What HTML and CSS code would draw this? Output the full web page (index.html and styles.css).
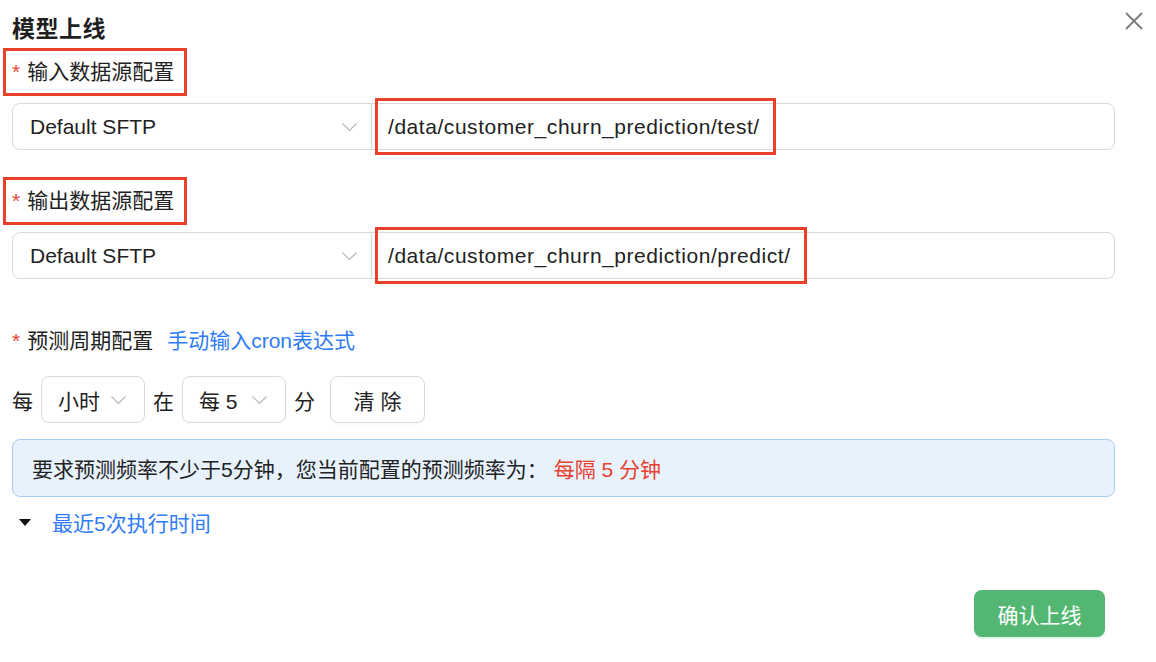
FILE: index.html
```html
<!DOCTYPE html>
<html lang="zh-CN">
<head>
<meta charset="utf-8">
<title>模型上线</title>
<link rel="stylesheet" href="styles.css">
</head>
<body>
<div class="modal">
  <button class="close" aria-label="关闭">
    <svg width="18" height="18" viewBox="0 0 18 18"><path d="M1 1L17 17M17 1L1 17" stroke="#7a7a7a" stroke-width="1.8" fill="none"/></svg>
  </button>
  <h1 class="title">模型上线</h1>

  <div class="item">
    <div class="label mark"><span class="req">*</span>输入数据源配置</div>
    <div class="group">
      <div class="select wide"><span>Default SFTP</span><svg class="chev" width="15" height="8" viewBox="0 0 15 8"><path d="M0.5 0.5L7.5 7.5L14.5 0.5" stroke="#b8b8b8" stroke-width="1.2" fill="none"/></svg></div>
      <div class="input"><span class="hl">/data/customer_churn_prediction/test/</span></div>
    </div>
  </div>

  <div class="item second">
    <div class="label mark"><span class="req">*</span>输出数据源配置</div>
    <div class="group">
      <div class="select wide"><span>Default SFTP</span><svg class="chev" width="15" height="8" viewBox="0 0 15 8"><path d="M0.5 0.5L7.5 7.5L14.5 0.5" stroke="#b8b8b8" stroke-width="1.2" fill="none"/></svg></div>
      <div class="input"><span class="hl">/data/customer_churn_prediction/predict/</span></div>
    </div>
  </div>

  <div class="cron-label"><span class="req">*</span>预测周期配置<a class="link">手动输入cron表达式</a></div>

  <div class="cron-row">
    <span class="word">每</span>
    <div class="select small"><span>小时</span><svg class="chev" width="15" height="8" viewBox="0 0 15 8"><path d="M0.5 0.5L7.5 7.5L14.5 0.5" stroke="#b8b8b8" stroke-width="1.2" fill="none"/></svg></div>
    <span class="word">在</span>
    <div class="select small"><span>每 5</span><svg class="chev" width="15" height="8" viewBox="0 0 15 8"><path d="M0.5 0.5L7.5 7.5L14.5 0.5" stroke="#b8b8b8" stroke-width="1.2" fill="none"/></svg></div>
    <span class="word">分</span>
    <button class="btn">清 除</button>
  </div>

  <div class="info">要求预测频率不少于5分钟，您当前配置的预测频率为：<span class="warn">每隔 5 分钟</span></div>

  <div class="collapse"><span class="tri"></span><a class="link">最近5次执行时间</a></div>

  <div class="footer"><button class="primary">确认上线</button></div>
</div>
</body>
</html>
```
FILE: styles.css
```css
* { box-sizing: border-box; }
html, body { margin: 0; background: #fff; }
body {
  font-family: "Liberation Sans", "Noto Sans CJK SC", sans-serif;
  font-size: 21px;
  color: #222;
}
.modal {
  position: relative;
  width: 1156px;
  height: 662px;
  padding: 11px 41px 0 12px;
}
.close {
  position: absolute;
  top: 12px;
  right: 13px;
  width: 18px;
  height: 18px;
  padding: 0;
  border: 0;
  background: none;
  display: flex;
}
.title {
  margin: 0;
  font-size: 23px;
  line-height: 36px;
  font-weight: 700;
  color: #1f1f1f;
  letter-spacing: 0.5px;
}
.item { display: flex; flex-direction: column; align-items: flex-start; }
.item.second { margin-top: 26px; }
.label {
  display: inline-flex;
  align-items: center;
  line-height: 30px;
}
.mark {
  height: 48px;
  margin-left: -9px;
  margin-top: 1px;
  padding: 0 10px 0 6px;
  border: 3px solid #e8412a;
}
.req {
  color: #f04438;
  margin-right: 7px;
  font-size: 21px;
}
.group {
  display: flex;
  width: 100%;
  margin-top: 7px;
  height: 47px;
}
.select {
  display: flex;
  align-items: center;
  justify-content: space-between;
  border: 1px solid #d9d9d9;
  border-radius: 8px;
  height: 47px;
  background: #fff;
}
.select.wide {
  width: 360px;
  padding: 0 14px 0 17px;
  border-radius: 8px 0 0 8px;
}
.select.small {
  width: 104px;
  padding: 0 18px 0 16px;
}
.chev { flex: none; margin-top: 1px; }
.input {
  flex: 1;
  margin-left: -1px;
  border: 1px solid #d9d9d9;
  border-radius: 0 8px 8px 0;
  display: flex;
  align-items: center;
  height: 47px;
}
.hl {
  display: flex;
  align-items: center;
  height: 57px;
  margin-left: 3px;
  padding: 0 13px 0 10px;
  border: 3px solid #e8412a;
  letter-spacing: 0.55px;
}
.cron-label {
  margin-top: 46px;
  line-height: 32px;
  display: flex;
  align-items: center;
}
.link {
  color: #2f7cf6;
  text-decoration: none;
}
.cron-label .link { margin-left: 14px; }
.cron-row {
  margin-top: 19px;
  display: flex;
  align-items: center;
  gap: 8px;
}
.btn {
  margin-left: 7px;
  width: 95px;
  height: 47px;
  border: 1px solid #d9d9d9;
  border-radius: 8px;
  background: #fff;
  font: inherit;
  color: #222;
  box-shadow: 0 2px 0 rgba(0,0,0,0.02);
}
.info {
  margin-top: 16px;
  height: 58px;
  border: 1px solid #a8cbf5;
  background: #e8f2fd;
  border-radius: 8px;
  display: flex;
  align-items: center;
  padding-left: 19px;
}
.warn { color: #e8402f; margin-left: 6px; }
.collapse {
  margin-top: 9px;
  height: 32px;
  display: flex;
  align-items: center;
}
.tri {
  width: 0;
  height: 0;
  margin-left: 7px;
  border-left: 6.5px solid transparent;
  border-right: 6.5px solid transparent;
  border-top: 7px solid #111;
  margin-right: 21px;
}
.footer {
  margin-top: 52px;
  display: flex;
  justify-content: flex-end;
  padding-right: 10px;
}
.primary {
  width: 131px;
  height: 47px;
  border: 0;
  border-radius: 8px;
  background: #53b773;
  color: #fff;
  font: inherit;
  box-shadow: 0 2px 0 rgba(83,183,115,0.15);
}
```
